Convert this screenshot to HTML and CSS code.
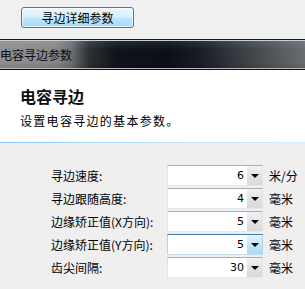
FILE: index.html
```html
<!DOCTYPE html>
<html>
<head>
<meta charset="utf-8">
<link rel="stylesheet" href="styles.css">
</head>
<body>
<div class="page">
  <div class="top">
    <button class="btn">寻边详细参数</button>
  </div>
  <div class="bar"><span class="bar-text">电容寻边参数</span></div>
  <div class="intro">
    <div class="title">电容寻边</div>
    <div class="sub">设置电容寻边的基本参数。</div>
  </div>
  <div class="rule"></div>
  <div class="form">
    <div class="label">寻边速度:</div>
    <div class="combo"><span class="val">6</span><span class="drop"><span class="tri"></span></span></div>
    <div class="unit">米/分</div>

    <div class="label">寻边跟随高度:</div>
    <div class="combo"><span class="val">4</span><span class="drop"><span class="tri"></span></span></div>
    <div class="unit">毫米</div>

    <div class="label">边缘矫正值(X方向):</div>
    <div class="combo"><span class="val">5</span><span class="drop"><span class="tri"></span></span></div>
    <div class="unit">毫米</div>

    <div class="label">边缘矫正值(Y方向):</div>
    <div class="combo focus"><span class="val">5</span><span class="drop"><span class="tri"></span></span></div>
    <div class="unit">毫米</div>

    <div class="label">齿尖间隔:</div>
    <div class="combo"><span class="val">30</span><span class="drop"><span class="tri"></span></span></div>
    <div class="unit">毫米</div>
  </div>
</div>
</body>
</html>
```

FILE: styles.css
```css
html, body {
  margin: 0;
  padding: 0;
}
body {
  width: 305px;
  height: 289px;
  overflow: hidden;
  background: #efefef;
  font-family: "Noto Sans CJK SC", "Noto Sans", sans-serif;
  font-size: 12px;
  color: #000;
}
.page {
  display: flex;
  flex-direction: column;
}
.top {
  height: 39px;
  box-sizing: border-box;
  background: #f0f0f0;
  padding: 7px 0 0 21px;
}
.btn {
  display: flex;
  align-items: center;
  justify-content: center;
  width: 113px;
  height: 21px;
  margin: 0;
  padding: 0;
  border: 1px solid #3c7fb1;
  border-radius: 3px;
  background: linear-gradient(#eaf6fd 0%, #d9f0fc 45%, #bee6fd 55%, #a7d9f5 100%);
  box-shadow: inset 0 0 0 1px rgba(255,255,255,0.7);
  font-family: "Noto Sans CJK SC", sans-serif;
  font-size: 12px;
  line-height: 1;
  color: #000;
}
.bar {
  height: 31px;
  box-sizing: border-box;
  border-top: 1px solid #16191c;
  border-bottom: 1px solid #0e1012;
  display: flex;
  align-items: center;
  background:
    linear-gradient(rgba(255,255,255,0.10), rgba(255,255,255,0) 35%, rgba(0,0,0,0) 75%, rgba(0,0,0,0.12)),
    linear-gradient(90deg, #8e9092 0%, #86888b 18%, #6f7276 23%, #2c3136 29%, #0f141a 38%, #0b1016 55%, #161c22 65%, #3b4045 80%, #696d71 100%);
  box-shadow: inset 0 1px 0 #c9d0d4, inset 0 -1px 0 #b7bbbe;
}
.bar-text {
  color: #0c0c0c;
  font-size: 12px;
  line-height: 1;
}
.intro {
  height: 72px;
  box-sizing: border-box;
  background: #fff;
  padding: 17px 0 0 20px;
}
.title {
  font-size: 16px;
  font-weight: bold;
  line-height: 18px;
  color: #111;
}
.sub {
  margin-top: 9px;
  font-size: 12px;
  line-height: 14px;
  letter-spacing: 1.3px;
}
.rule {
  height: 1px;
  background: linear-gradient(90deg, #8ccaf6, #b9dff9 50%, #d9ecfb);
}
.form {
  display: grid;
  grid-template-columns: 116px 96px auto;
  grid-auto-rows: 21px;
  row-gap: 2px;
  align-items: center;
  padding: 22px 0 0 51px;
}
.label {
  font-size: 12px;
  line-height: 1;
  white-space: nowrap;
}
.unit {
  padding-left: 6px;
  font-size: 12px;
  line-height: 1;
}
.combo {
  height: 21px;
  box-sizing: border-box;
  display: flex;
  background: #fff;
  border: 1px solid #e2e3ea;
  border-top-color: #abadb3;
  border-bottom-color: #e3e9ef;
}
.combo .val {
  flex: 1;
  text-align: right;
  padding-right: 2px;
  font-family: "DejaVu Sans", sans-serif;
  font-size: 11px;
  line-height: 19px;
}
.drop {
  width: 15px;
  display: flex;
  align-items: center;
  justify-content: center;
  background: linear-gradient(#f2f2f2, #e3e3e3 50%, #d9d9d9);
  border-left: 1px solid #fff;
}
.tri {
  width: 0;
  height: 0;
  border-left: 4px solid transparent;
  border-right: 4px solid transparent;
  border-top: 4px solid #000;
}
.combo.focus {
  border-color: #b5d3ea;
  border-top-color: #3d7bad;
  border-bottom-color: #c5dcee;
}
.combo.focus .drop {
  background: linear-gradient(#e5f4fc, #c4e5f6 50%, #a9daf3);
}
```
